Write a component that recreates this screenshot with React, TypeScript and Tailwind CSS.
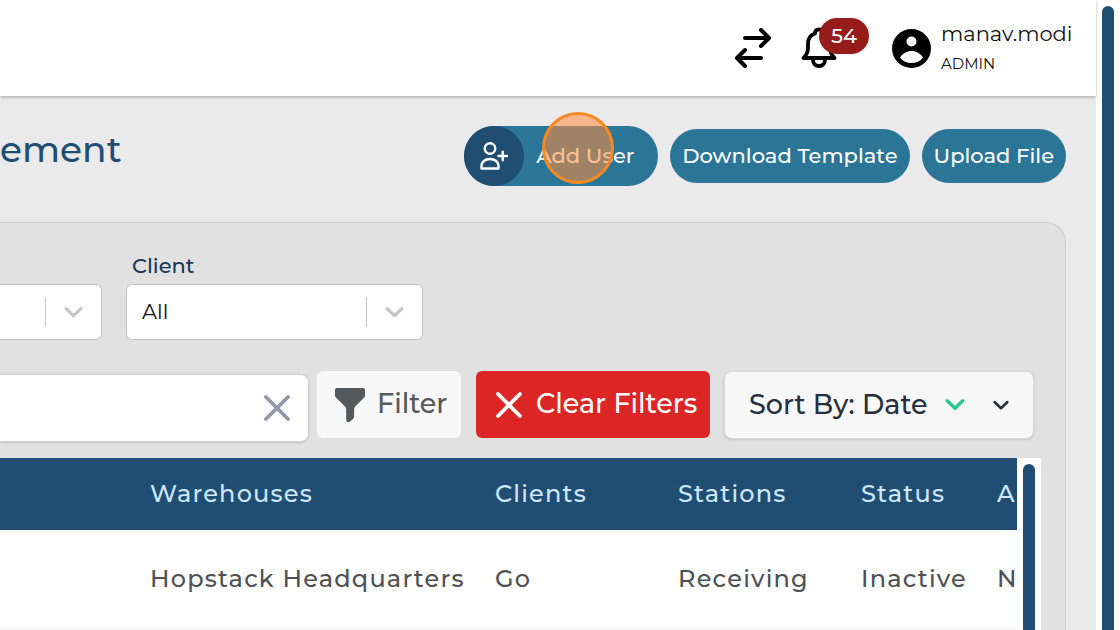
import type { ReactNode } from "react";

const columns = ["Warehouses", "Clients", "Stations", "Status", "A"];

const users = [
  { warehouse: "Hopstack Headquarters", client: "Go", station: "Receiving", status: "Inactive", active: "N" },
];

function Chevron({ className }: { className?: string }) {
  return (
    <svg viewBox="0 0 18 12" className={className} fill="none" stroke="currentColor" strokeWidth="3" strokeLinecap="round" strokeLinejoin="round" aria-hidden="true">
      <path d="M2 2.5 9 9.2 16 2.5" />
    </svg>
  );
}

function Cross({ className }: { className?: string }) {
  return (
    <svg viewBox="0 0 26 26" className={className} fill="none" stroke="currentColor" strokeWidth="3.8" strokeLinecap="round" aria-hidden="true">
      <path d="M2 2 24 24M24 2 2 24" />
    </svg>
  );
}

function PillButton({ children }: { children: ReactNode }) {
  return (
    <button type="button" className="h-[54px] shrink-0 rounded-full bg-[#2b7597] px-3 text-[21px] font-medium text-white">
      {children}
    </button>
  );
}

function TopBar() {
  return (
    <header className="relative z-10 flex h-24 shrink-0 items-center justify-end bg-white pr-6 shadow-[0_1px_3px_rgba(0,0,0,0.3)]">
      <button type="button" aria-label="Switch" className="mr-[30px]">
        <svg viewBox="0 0 36 40" className="h-10 w-9" fill="none" stroke="#000" strokeWidth="4" strokeLinecap="round" strokeLinejoin="round">
          <path d="M10 10h23M26 2l8 8-8 8M26 30H3M10 22l-8 8 8 8" />
        </svg>
      </button>
      <button type="button" aria-label="Notifications" className="relative mr-[55px]">
        <svg viewBox="0 0 36 42" className="h-[42px] w-9" fill="none" stroke="#000" strokeWidth="3.8" strokeLinecap="round" strokeLinejoin="round">
          <path d="M2.500 31h31c-3-3-4.500-6-4.500-10v-4c0-5-2.600-9.200-7-10.500C22 3.800 20.500 2.300 18 2.300S14 3.800 14 6.500C9.600 7.800 7 12 7 17v4c0 4-1.500 7-4.500 10Z" />
          <path d="M12 32.500c0 4.300 2.500 6.500 6 6.500s6-2.200 6-6.500" />
        </svg>
        <span className="absolute -top-[9px] left-[18px] flex h-9 w-[50px] items-center justify-center rounded-full bg-[#961b1b] text-[21px] font-medium text-white">
          54
        </span>
      </button>
      <div className="flex items-center gap-[10px]">
        <svg viewBox="0 0 39 39" className="size-[39px]" aria-hidden="true">
          <circle cx="19.500" cy="19.500" r="19.500" fill="#000" />
          <circle cx="19.500" cy="12.500" r="5" fill="#fff" />
          <path d="M8 28.500c2.400-4 7-6.500 11.500-6.500S28.600 24.500 31 28.500c-2.700 3.600-6.800 5.600-11.500 5.600S10.700 32.100 8 28.500Z" fill="#fff" />
        </svg>
        <div className="w-[131px] pb-px">
          <div className="text-[21px] leading-8 whitespace-nowrap text-[#111]">manav.modi</div>
          <div className="text-[15px] leading-7 text-[#111]">ADMIN</div>
        </div>
      </div>
    </header>
  );
}

function SelectBox({ id, className, children }: { id: string; className: string; children?: ReactNode }) {
  return (
    <div className={`relative h-14 border border-[#c4c4c4] bg-white ${className}`}>
      <select id={id} aria-label={id} className="size-full appearance-none bg-transparent pl-[15px] text-[21px] text-[#111] outline-none">
        {children}
      </select>
      <div className="pointer-events-none absolute inset-y-0 right-0 flex items-center">
        <div className="h-[30px] w-px bg-[#c4c4c4]" />
        <Chevron className="mx-[18px] w-[19px] text-[#c4c4c4]" />
      </div>
    </div>
  );
}

function Filters() {
  return (
    <div className="flex items-end gap-6">
      <SelectBox id="warehouse" className="w-[102px] rounded-r-md border-l-0" />
      <div className="w-[297px]">
        <label htmlFor="client" className="block pl-[6px] text-[21px] leading-9 font-medium text-[#17375a]">
          Client
        </label>
        <SelectBox id="client" className="rounded-md">
          <option>All</option>
        </SelectBox>
      </div>
    </div>
  );
}

function Toolbar() {
  return (
    <div className="flex items-start gap-[14px] pr-[31px]">
      <div className="flex min-w-0 flex-1 items-start gap-2">
        <div className="relative mt-[3px] min-w-0 flex-1">
          <input type="text" aria-label="Search" className="block h-[68px] w-full rounded-r-lg border border-l-0 border-[#cfcfcf] bg-white shadow-sm outline-none" />
          <button type="button" aria-label="Clear search" className="absolute top-[21px] right-[19px]">
            <Cross className="size-[26px] text-[#9298a8]" />
          </button>
        </div>
        <button type="button" className="mr-px flex h-[67px] w-36 items-center gap-3 rounded-md bg-[#f7f7f7] pl-[18px] text-[27px] font-medium text-[#55595c]">
          <svg viewBox="0 0 30 34" className="h-[34px] w-[30px] shrink-0" fill="currentColor" aria-hidden="true">
            <path d="M2 0h26a2 2 0 0 1 2 2v5.500a3 3 0 0 1-.9 2.100L20 18.800a3 3 0 0 0-.9 2.100v7.600a3 3 0 0 1-.9 2.100l-2.600 2.700c-1.500 1.400-4.400.9-4.400-1.500V20.900a3 3 0 0 0-.9-2.100L.9 9.600A3 3 0 0 1 0 7.500V2a2 2 0 0 1 2-2Z" />
          </svg>
          Filter
        </button>
      </div>
      <button type="button" className="flex h-[67px] w-[234px] items-center gap-[14px] rounded-md bg-[#dc2626] pl-5 text-[27px] font-medium whitespace-nowrap text-white">
        <Cross className="size-[26px] shrink-0" />
        Clear Filters
      </button>
      <button type="button" className="flex h-[68px] w-[310px] items-center rounded-lg border border-[#d9d9d9] bg-[#f7f7f7] px-6 text-[27px] font-medium whitespace-nowrap text-[#272e3d] shadow-sm">
        <span className="flex-1 text-left">Sort By: Date</span>
        <Chevron className="w-5 text-[#2cc58f]" />
        <Chevron className="ml-7 w-4" />
      </button>
    </div>
  );
}

function UsersTable() {
  return (
    <div className="mr-6 flex min-h-0 flex-1 overflow-hidden bg-white">
      <div className="min-w-0 flex-1 overflow-hidden">
        <table className="w-full table-fixed text-left text-2xl font-medium tracking-wider whitespace-nowrap">
          <colgroup>
            <col className="w-[150px]" />
            <col className="w-[345px]" />
            <col className="w-[183px]" />
            <col className="w-[183px]" />
            <col className="w-[136px]" />
            <col />
          </colgroup>
          <thead className="bg-[#1f4e72] text-[#cfe6fb]">
            <tr className="h-[72px]">
              <td />
              {columns.map((column) => (
                <th key={column} className="overflow-hidden font-medium">
                  {column}
                </th>
              ))}
            </tr>
          </thead>
          <tbody className="text-[#4e5154]">
            {users.map((user) => (
              <tr key={user.warehouse} className="h-[97px]">
                <td />
                <td>{user.warehouse}</td>
                <td>{user.client}</td>
                <td>{user.station}</td>
                <td>{user.status}</td>
                <td className="overflow-hidden">{user.active}</td>
              </tr>
            ))}
            <tr className="h-24 bg-[#f7f7f7]">
              <td colSpan={6} />
            </tr>
          </tbody>
        </table>
      </div>
      <div className="w-6 shrink-0 px-[6px] pt-[6px]">
        <div className="h-full rounded-t-full bg-[#1f4e72]" />
      </div>
    </div>
  );
}

export default function App() {
  return (
    <div className="flex h-screen overflow-hidden bg-white font-['Montserrat','Inter',sans-serif]">
      <div className="flex min-w-0 flex-1 flex-col bg-[#eaeaea]">
        <TopBar />
        <div className="flex items-center gap-3 pt-[30px] pr-[30px]">
          <h1 className="flex-1 pb-[14px] text-[36px] leading-[46px] font-medium text-[#1f4e72]">ement</h1>
          <div className="relative">
            <button type="button" className="flex h-[60px] w-[194px] items-center gap-3 rounded-full bg-[#2b7597] text-[21px] font-medium whitespace-nowrap text-white">
              <span className="flex size-[60px] shrink-0 items-center justify-center rounded-full bg-[#1f4e72]">
                <svg viewBox="0 0 28 28" className="size-7" fill="none" stroke="#fff" strokeWidth="2.4" strokeLinecap="round" strokeLinejoin="round" aria-hidden="true">
                  <circle cx="10" cy="6.500" r="5.300" />
                  <path d="M1.500 26.500v-2.500c0-4 3.500-7 8.500-7s8.500 3 8.500 7v2.500ZM18.500 14h8.500M22.700 9.800v8.500" />
                </svg>
              </span>
              Add User
            </button>
            <div className="pointer-events-none absolute -top-[14px] left-[78px] size-[72px] rounded-full border-3 border-[#f58a23] bg-[#ff8c3c]/55" />
          </div>
          <PillButton>Download Template</PillButton>
          <PillButton>Upload File</PillButton>
        </div>
        <main className="mt-9 mr-[30px] flex min-h-0 flex-1 flex-col rounded-tr-[20px] border-t border-r border-[#cbcdcf] bg-[#e1e1e1] pt-[25px]">
          <Filters />
          <div className="mt-[31px] mb-4">
            <Toolbar />
          </div>
          <UsersTable />
        </main>
      </div>
      <div className="w-6 shrink-0 px-[6px] pt-[6px]">
        <div className="h-full rounded-t-full bg-[#1f4e72]" />
      </div>
    </div>
  );
}
